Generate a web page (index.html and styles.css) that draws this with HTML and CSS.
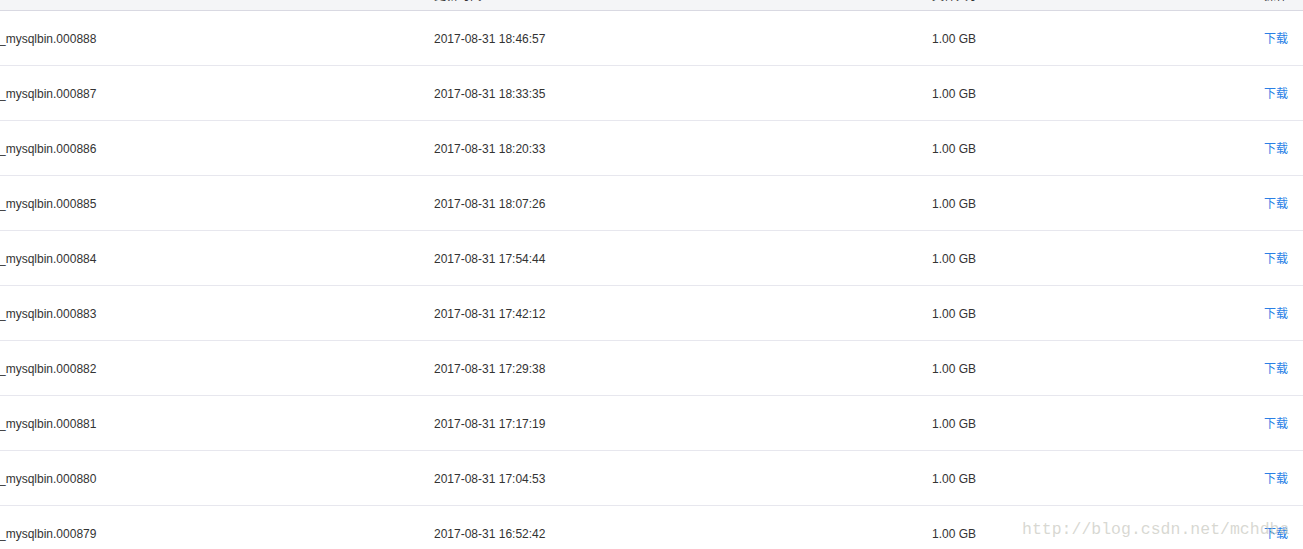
FILE: index.html
```html
<!DOCTYPE html>
<html lang="zh">
<head>
<meta charset="utf-8">
<title>binlog</title>
<link rel="stylesheet" href="styles.css">
</head>
<body>
<div class="wrap">
<table class="list">
  <colgroup>
    <col class="c-name"><col class="c-time"><col class="c-size"><col class="c-op">
  </colgroup>
  <thead>
    <tr><th></th><th><div class="th-in">更新时间</div></th><th><div class="th-in">文件大小</div></th><th class="op"><div class="th-in">操作</div></th></tr>
  </thead>
  <tbody>
    <tr><td>_mysqlbin.000888</td><td>2017-08-31 18:46:57</td><td>1.00 GB</td><td class="op"><a href="#">下载</a></td></tr>
    <tr><td>_mysqlbin.000887</td><td>2017-08-31 18:33:35</td><td>1.00 GB</td><td class="op"><a href="#">下载</a></td></tr>
    <tr><td>_mysqlbin.000886</td><td>2017-08-31 18:20:33</td><td>1.00 GB</td><td class="op"><a href="#">下载</a></td></tr>
    <tr><td>_mysqlbin.000885</td><td>2017-08-31 18:07:26</td><td>1.00 GB</td><td class="op"><a href="#">下载</a></td></tr>
    <tr><td>_mysqlbin.000884</td><td>2017-08-31 17:54:44</td><td>1.00 GB</td><td class="op"><a href="#">下载</a></td></tr>
    <tr><td>_mysqlbin.000883</td><td>2017-08-31 17:42:12</td><td>1.00 GB</td><td class="op"><a href="#">下载</a></td></tr>
    <tr><td>_mysqlbin.000882</td><td>2017-08-31 17:29:38</td><td>1.00 GB</td><td class="op"><a href="#">下载</a></td></tr>
    <tr><td>_mysqlbin.000881</td><td>2017-08-31 17:17:19</td><td>1.00 GB</td><td class="op"><a href="#">下载</a></td></tr>
    <tr><td>_mysqlbin.000880</td><td>2017-08-31 17:04:53</td><td>1.00 GB</td><td class="op"><a href="#">下载</a></td></tr>
    <tr><td>_mysqlbin.000879</td><td>2017-08-31 16:52:42</td><td>1.00 GB</td><td class="op"><a href="#">下载</a></td></tr>
  </tbody>
</table>
<div class="watermark">http://blog.csdn.net/mchdba</div>
</div>
</body>
</html>
```
FILE: styles.css
```css
html, body {
  margin: 0;
  padding: 0;
  background: #fff;
  overflow: hidden;
}
body {
  font-family: "Liberation Sans", Arial, "Noto Sans CJK SC", sans-serif;
  font-size: 12px;
  color: #333;
}
.wrap {
  position: relative;
  width: 1303px;
  height: 549px;
  overflow: hidden;
}
.list {
  width: 1303px;
  border-collapse: collapse;
  table-layout: fixed;
}
.c-name { width: 434px; }
.c-time { width: 498px; }
.c-size { width: 290px; }
.c-op { width: 81px; }
.list thead tr { height: 10px; }
.list th {
  height: 10px;
  padding: 0;
  background: #f4f5f7;
  border-bottom: 1px solid #d9d9e2;
  text-align: left;
  font-weight: normal;
  vertical-align: top;
  overflow: hidden;
}
.th-in {
  height: 2px;
  line-height: 12px;
  margin-top: -11px;
  margin-bottom: 19px;
  color: #333;
  font-family: "Noto Sans CJK SC", sans-serif;
  font-size: 12px;
}
.list td {
  height: 53px;
  padding: 1px 0 0 0;
  border-bottom: 1px solid #e7e7ee;
  line-height: 16px;
  vertical-align: middle;
  white-space: nowrap;
  overflow: hidden;
}
.list td:first-child { text-indent: -1px; }
.list .op {
  text-align: right;
  padding-right: 15px;
}
.list a {
  color: #2a7fe6;
  text-decoration: none;
  font-family: "Noto Sans CJK SC", sans-serif;
}
.watermark {
  position: absolute;
  left: 1022px;
  top: 520px;
  font-family: "Liberation Mono", monospace;
  font-size: 16.5px;
  color: rgba(190, 190, 180, 0.6);
  pointer-events: none;
  white-space: nowrap;
}
```
